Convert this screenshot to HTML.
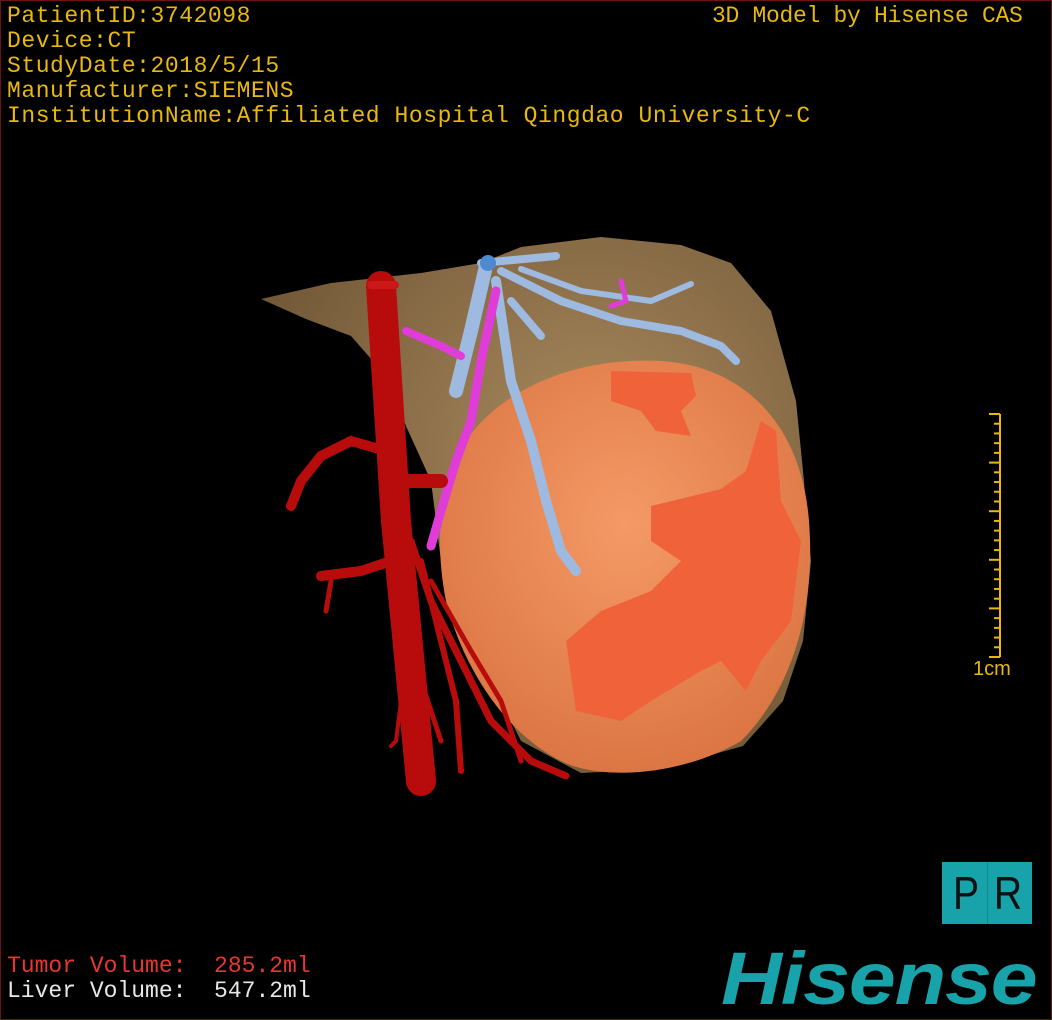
<!DOCTYPE html>
<html><head><meta charset="utf-8"><style>
html,body{margin:0;padding:0;background:#000}
#v{position:relative;width:1050px;height:1018px;border:1px solid #6b1414;background:#000;overflow:hidden;font-family:"Liberation Sans","Noto Sans CJK SC",sans-serif}
.t{position:absolute;left:6px;color:#e8b80c;font-size:23px;line-height:25px;white-space:pre;font-family:"Liberation Mono",monospace}
.r{color:#e8372f}
.w{color:#e8e8e8}
</style></head><body><div id="v">
<div class="t" style="top:3px;letter-spacing:0.55px">PatientID:3742098<br>Device:CT<br>StudyDate:2018/5/15<br>Manufacturer:SIEMENS<br>InstitutionName:Affiliated Hospital Qingdao University-C</div>
<div class="t" style="top:3px;left:711px;letter-spacing:-0.3px">3D Model by Hisense CAS</div>
<div class="t" style="top:953px"><span class="r">Tumor Volume:  285.2ml</span><br><span class="w">Liver Volume:  547.2ml</span></div>
<svg width="1050" height="1018" style="position:absolute;left:0;top:0">
<defs>
<radialGradient id="lg" cx="0.6" cy="0.4" r="0.7"><stop offset="0" stop-color="#a98a5e"/><stop offset="1" stop-color="#6e5434"/></radialGradient>
<radialGradient id="tg" cx="0.5" cy="0.4" r="0.7"><stop offset="0" stop-color="#f49a66"/><stop offset="1" stop-color="#d8703e"/></radialGradient>
</defs>
<path d="M260,298 L330,282 L420,272 L480,262 L520,246 L600,236 L680,244 L730,262 L770,310 L795,400 L802,470 L810,560 L802,640 L782,700 L742,745 L660,768 L580,772 L520,740 L480,660 L440,560 L430,480 L405,425 L385,375 L350,335 L305,318 Z" fill="url(#lg)"/>
<path d="M445,480 C470,400 560,355 660,360 C740,365 800,420 808,520 C815,610 790,690 740,740 C680,775 600,780 560,760 C500,730 460,660 445,600 C437,560 437,520 445,480 Z" fill="url(#tg)"/>
<path d="M610,370 L690,372 L695,395 L680,410 L690,435 L655,430 L640,410 L610,400 Z" fill="#f0633a"/>
<path d="M650,505 L720,488 L745,470 L760,420 L775,430 L780,500 L800,540 L790,620 L760,660 L745,690 L720,660 L700,670 L650,700 L620,720 L575,710 L565,640 L600,610 L650,590 L680,560 L650,540 Z" fill="#f0633a"/>
<g fill="none" stroke="#9ebae0" stroke-linecap="round">
<path d="M485,265 L470,330 L455,390" stroke-width="14"/>
<path d="M495,280 L510,380 L530,440 L545,500 L560,550 L575,570" stroke-width="10"/>
<path d="M500,270 L560,300 L620,320 L680,330 L720,345 L735,360" stroke-width="8"/>
<path d="M520,268 L580,290 L650,300 L690,283" stroke-width="6"/>
<path d="M480,262 L555,255" stroke-width="8"/>
<path d="M510,300 L540,335" stroke-width="8"/>
</g>
<circle cx="487" cy="262" r="8" fill="#4e8ad0"/>
<g fill="none" stroke="#e03cd8" stroke-linecap="round">
<path d="M495,290 L480,360 L470,420 L455,460 L440,510 L430,545" stroke-width="9"/>
<path d="M405,330 L440,345 L460,355" stroke-width="8"/>
<path d="M620,280 L625,300 L610,305" stroke-width="5"/>
</g>
<g fill="none" stroke="#b80c0c" stroke-linecap="round">
<path d="M380,285 L395,520 L420,780" stroke-width="30"/>
<path d="M385,450 L350,440 L320,455 L300,480 L290,505" stroke-width="10"/>
<path d="M395,480 L440,480" stroke-width="14"/>
<path d="M390,560 L360,570 L320,575" stroke-width="10"/>
<path d="M330,580 L325,610" stroke-width="5"/>
<path d="M410,540 L430,600 L460,660 L490,720 L530,760 L565,775" stroke-width="7"/>
<path d="M420,560 L440,640 L455,700 L460,770" stroke-width="6"/>
<path d="M430,580 L470,650 L500,700 L520,760" stroke-width="5"/>
<path d="M410,600 L420,680 L440,740" stroke-width="5"/>
<path d="M400,700 L395,740 L390,745" stroke-width="4"/>
</g>
<rect x="366" y="280" width="32" height="8" rx="4" fill="#cc1818"/>
<line x1="999" y1="413" x2="999" y2="656" stroke="#e8b80c" stroke-width="2"/>
<g id="ticks" stroke="#e8b80c" stroke-width="2"></g>
<text x="972" y="674" fill="#e8b80c" font-family="Liberation Sans,sans-serif" font-size="20">1cm</text>
</svg>
<div style="position:absolute;left:941px;top:861px;width:90px;height:62px;background:#17a3a9"></div>
<div style="position:absolute;left:986px;top:861px;width:1px;height:62px;background:#0e8a90"></div>
<div style="position:absolute;left:944px;top:864px;width:42px;font-size:46px;line-height:56px;color:#111;text-align:center;font-family:'Liberation Sans',sans-serif;transform:scaleX(0.85)">P</div>
<div style="position:absolute;left:986px;top:864px;width:42px;font-size:46px;line-height:56px;color:#111;text-align:center;font-family:'Liberation Sans',sans-serif;transform:scaleX(0.85)">R</div>
<div style="position:absolute;left:720px;top:938px;font-size:74px;line-height:80px;font-weight:bold;font-style:italic;color:#17a3a9;font-family:'Liberation Sans',sans-serif;letter-spacing:-1px;transform:scaleX(1.14);transform-origin:left">Hisense</div>
</div>
<script>
var g=document.getElementById('ticks'),s='';
for(var i=0;i<=25;i++){var y=413+i*9.72;var l=(i%5==0)?11:6;s+='<line x1="'+(999-l)+'" y1="'+y+'" x2="999" y2="'+y+'"/>';}
g.innerHTML=s;
</script>
</body></html>
